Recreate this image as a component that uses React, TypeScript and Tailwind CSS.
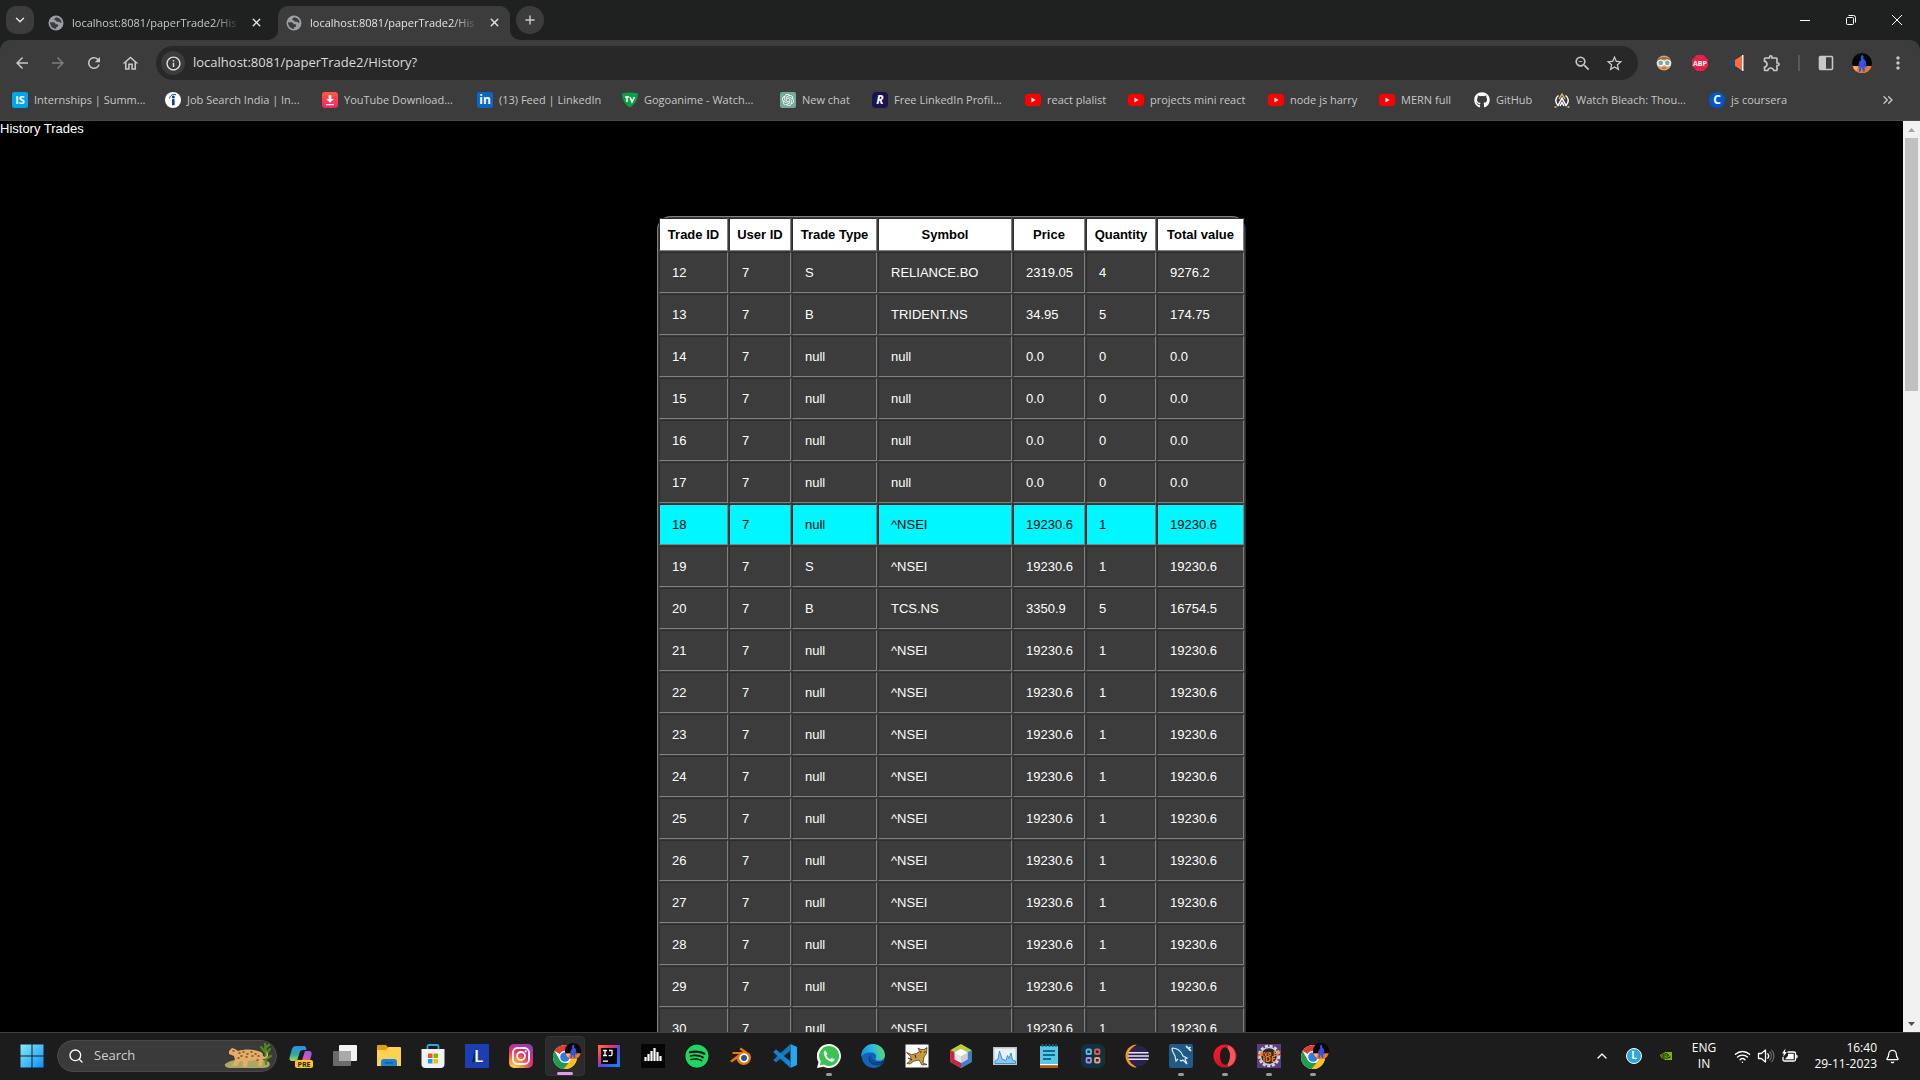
import type { ReactNode } from "react";
import { Bell, ChevronDown, ChevronUp, ChevronsRight, Plus, Search, Wifi, X } from "lucide-react";
import { FaGithub, FaSpotify } from "react-icons/fa";
import {
  MdArrowBack,
  MdArrowForward,
  MdInfoOutline,
  MdMoreVert,
  MdOutlineExtension,
  MdOutlineHome,
  MdRefresh,
  MdStarBorder,
  MdZoomOut,
} from "react-icons/md";
import { SiNvidia, SiOpenai } from "react-icons/si";

/* ---------- drawings ---------- */

function Globe() {
  return (
    <svg viewBox="0 0 16 16" className="size-4 shrink-0" aria-hidden="true">
      <circle cx="8" cy="8" r="7.500" fill="#9aa0a6" />
      <path d="M8.500 2.200c2.800.4 5 2.700 5.200 5.300-.9.8-2 .2-2.200-.8H9.300c-.9 0-1.300-.7-1.300-1.400H6.200c0-1.600 1-2.700 2.300-3.100z" fill="#3c3c3c" />
      <path d="M2 7.200h3.200c1.500 0 2.300.9 2.300 2h1.700c.6 0 1 .6 1 1.300 0 1.200-.9 1.600-2 1.800v1.500C4.700 13.600 2 11 2 7.200z" fill="#3c3c3c" />
    </svg>
  );
}

function YouTube() {
  return (
    <svg viewBox="0 0 16 16" className="size-4 shrink-0" aria-hidden="true">
      <rect x="0" y="2" width="16" height="12" rx="3" fill="#f00" />
      <path d="M6.500 5.600v4.900l4-2.450z" fill="#fff" />
    </svg>
  );
}

function Figure() {
  return (
    <>
      <circle cx="12" cy="12" r="12" fill="#050508" />
      <path d="M0.400 15.500h23.200A12 12 0 0 1 0.400 15.500z" fill="#f4762a" />
      <path d="M1 16l7 0-3 5.500A12 12 0 0 1 1 16z" fill="#fdb35c" />
      <path d="M12 2l2 2-.5 2.500 3 3 1 8-1.500.5-1-5 .5 9-2.500.5-1-6-2 6H8l1.500-9-1.500 4-1-.5 2-7 2-1.500-.7-3z" fill="#2458e8" />
      <path d="M11.500 8l2 2-1 5-2 2z" fill="#7a3bd0" />
    </>
  );
}

function ChromeLogo() {
  return (
    <svg viewBox="0 0 30 26" className="ml-1 h-[26px] w-[30px] shrink-0" aria-hidden="true">
      <circle cx="13" cy="14" r="12" fill="#fff" />
      <path d="M2.600 8A12 12 0 0 1 23.400 8H13a6 6 0 0 0-5.200 3z" fill="#e33b2e" />
      <path d="M2.600 8l5.200 9a6 6 0 0 0 5.200 3l-2.600 5.700A12 12 0 0 1 2.600 8z" fill="#1e9e4a" />
      <path d="M13 8h10.400a12 12 0 0 1-11.800 17.900L18.200 17A6 6 0 0 0 13 8z" fill="#fbc116" />
      <path d="M7.800 17l5.200 3h3.600l-5 5.900A12 12 0 0 1 5 22z" fill="#1e9e4a" />
      <circle cx="13" cy="14" r="6" fill="#fff" />
      <circle cx="13" cy="14" r="4.800" fill="#2f7be8" />
      <svg x="13" y="0" width="16" height="16" viewBox="0 0 24 24">
        <Figure />
      </svg>
    </svg>
  );
}

function Leopard() {
  return (
    <svg viewBox="0 0 48 28" className="h-7 w-12 shrink-0" aria-hidden="true">
      <path d="M1 22c6-6 34-8 44-2 3 5-3 6-8 6H8c-4 0-8-1-7-4z" fill="#a9a963" />
      <path d="M42 22c-1-7 1-12-1-20M42 12l4-5M41 10l-4-5M42 17l5-3M41 6l4-3" stroke="#4f8a1c" strokeWidth="2.200" fill="none" strokeLinecap="round" />
      <path d="M5 9l3-3 3 1 3 2c6-2 14-2 20 0 4 1 5 2 5 5l2 1c2-1 2-3 1-5l2 1c1 4-2 6-5 6l-1 7h-4l1-4-3-2-8 1-1 6h-4l0-5-3-1-3 5H8l3-6-1-4-5-2z" fill="#e2ae6a" />
      <path d="M15 11h1M19 10h1M23 12h1M27 10h1M31 12h1M17 14h1M22 15h1M28 14h1M34 14h1M33 18h1M14 16h1M9 9h1" stroke="#7c4a1c" strokeWidth="1.500" strokeLinecap="round" />
    </svg>
  );
}

function Art({ children }: { children: ReactNode }) {
  return (
    <svg viewBox="0 0 24 24" className="size-6 shrink-0" aria-hidden="true">
      {children}
    </svg>
  );
}

function WindowsLogo() {
  return (
    <Art>
      <defs>
        <linearGradient id="win" x1="0" y1="0" x2="1" y2="1">
          <stop offset="0" stopColor="#86eaff" />
          <stop offset="1" stopColor="#0a91f5" />
        </linearGradient>
      </defs>
      <path d="M.5.500h11v11H.5zM12.500.500h11v11h-11zM.5 12.500h11v11H.5zM12.500 12.500h11v11h-11z" fill="url(#win)" />
    </Art>
  );
}

function Speaker() {
  return (
    <svg viewBox="0 0 18 16" className="h-4 w-[18px]" fill="none" strokeWidth="1.300" strokeLinejoin="round" strokeLinecap="round" aria-hidden="true">
      <path d="M1.500 5.500h2.800L8.500 2v12l-4.200-3.500H1.500z" stroke="#fff" />
      <path d="M10.800 5.800a3.500 3.500 0 0 1 0 4.400" stroke="#fff" />
      <path d="M12.800 4a6 6 0 0 1 0 8M14.800 2.300a8.800 8.800 0 0 1 0 11.400" stroke="#666" />
    </svg>
  );
}

function Battery() {
  return (
    <svg viewBox="0 0 18 16" className="h-4 w-[18px]" aria-hidden="true">
      <path d="M6.500 4H13q1.500 0 1.500 1.500v6q0 1.500-1.500 1.500H3.500Q2 13 2 11.500V9" fill="none" stroke="#fff" strokeWidth="1.300" />
      <path d="M7 5.800h5.700v5.400H4l3-3.500z" fill="#fff" />
      <path d="M15.200 6.500q1.500.2 1.500 2t-1.500 2z" fill="#fff" />
      <path d="M4.500.5L1 5.500h2L2 9l4-5H4z" fill="#fff" />
    </svg>
  );
}

/* ---------- browser chrome ---------- */

function Tab({ active }: { active?: boolean }) {
  return (
    <div
      className={
        active
          ? "relative flex h-[34px] w-[232px] items-center rounded-t-[10px] bg-[#3c3c3c] pr-2 pl-2 text-[#e3e3e3]"
          : "flex h-[34px] w-[238px] items-center pr-3 pl-2 text-[#c7c7c7]"
      }
    >
      {active && (
        <>
          <svg viewBox="0 0 10 10" className="absolute bottom-0 -left-2.5 size-2.5" aria-hidden="true">
            <path d="M10 0v10H0A10 10 0 0 0 10 0z" fill="#3c3c3c" />
          </svg>
          <svg viewBox="0 0 10 10" className="absolute -right-2.5 bottom-0 size-2.5" aria-hidden="true">
            <path d="M0 0v10h10A10 10 0 0 1 0 0z" fill="#3c3c3c" />
          </svg>
        </>
      )}
      <Globe />
      <span className="ml-2 w-[168px] mask-r-from-85% text-[11px] whitespace-nowrap">localhost:8081/paperTrade2/His</span>
      <button type="button" aria-label="Close tab" className="ml-2 flex size-4 items-center justify-center pb-0.5 text-[#e3e3e3]">
        <X size={13} strokeWidth={2.5} />
      </button>
    </div>
  );
}

type Bookmark = { label: string; width: string; icon: ReactNode };

const box = "flex size-4 shrink-0 items-center justify-center font-bold text-white";

const bookmarks: Bookmark[] = [
  { label: "Internships | Summ...", width: "w-[153px]", icon: <span className={`${box} rounded-xs bg-[#00a5ec] text-[11px]`}>IS</span> },
  {
    label: "Job Search India | In...",
    width: "w-[157px]",
    icon: (
      <svg viewBox="0 0 16 16" className="size-4 shrink-0" aria-hidden="true">
        <circle cx="8" cy="8" r="8" fill="#fff" />
        <circle cx="8.300" cy="5" r="1.500" fill="#0b3c9c" />
        <path d="M7 7.200h2.600v6H7z" fill="#0b3c9c" />
        <path d="M4.500 6.500C5 3.500 8 1.500 11 2.800" stroke="#0b3c9c" fill="none" />
      </svg>
    ),
  },
  {
    label: "YouTube Download...",
    width: "w-[155px]",
    icon: (
      <svg viewBox="0 0 16 16" className="size-4 shrink-0" aria-hidden="true">
        <defs>
          <linearGradient id="ytd" x1="0" y1="0" x2="0" y2="1">
            <stop offset="0" stopColor="#ff5a3c" />
            <stop offset="1" stopColor="#f5216a" />
          </linearGradient>
        </defs>
        <rect width="16" height="16" rx="3" fill="url(#ytd)" />
        <path d="M6.700 3h2.600v4h2.500L8 10.800 4.200 7h2.500zM4 12h8v1.300H4z" fill="#fff" />
      </svg>
    ),
  },
  { label: "(13) Feed | LinkedIn", width: "w-[145px]", icon: <span className={`${box} rounded-xs bg-[#0a66c2] text-xs`}>in</span> },
  {
    label: "Gogoanime - Watch...",
    width: "w-[158px]",
    icon: (
      <svg viewBox="0 0 16 16" className="size-4 shrink-0" aria-hidden="true">
        <path d="M0 1.500q8-2 16 0c0 7-4 11-8 14C3 12.500 0 8 0 1.500z" fill="#0aa04a" />
        <path d="M3 5h4M5 5v5M8 5l2 5 2.500-5" stroke="#fff" strokeWidth="1.500" fill="none" />
      </svg>
    ),
  },
  {
    label: "New chat",
    width: "w-[92px]",
    icon: (
      <span className={`${box} rounded-xs bg-[#74aa9c]`}>
        <SiOpenai size={12} />
      </span>
    ),
  },
  { label: "Free LinkedIn Profil...", width: "w-[153px]", icon: <span className={`${box} rounded-sm bg-[#1c1250] text-xs italic`}>R</span> },
  { label: "react plalist", width: "w-[103px]", icon: <YouTube /> },
  { label: "projects mini react", width: "w-[140px]", icon: <YouTube /> },
  { label: "node js harry", width: "w-[111px]", icon: <YouTube /> },
  { label: "MERN full", width: "w-[95px]", icon: <YouTube /> },
  { label: "GitHub", width: "w-[80px]", icon: <FaGithub size={16} className="shrink-0 text-white" /> },
  {
    label: "Watch Bleach: Thou...",
    width: "w-[155px]",
    icon: (
      <svg viewBox="0 0 16 16" className="size-4 shrink-0" fill="none" aria-hidden="true">
        <path d="M4.500 3.500C1 6 .8 10 4 13.500L8 6l4 7.500C15.200 10 15 6 11.500 3.500M6 14l2-3.500 2 3.500" stroke="#fff" strokeWidth="1.500" />
        <path d="M5 7l3-5 3 5M.5 15h2M13.500 15h2" stroke="#e6b96a" strokeWidth="1.400" />
      </svg>
    ),
  },
  { label: "js coursera", width: "w-[100px]", icon: <span className={`${box} rounded-full bg-[#0056d2] text-xs`}>C</span> },
];

function TabStrip() {
  return (
    <header className="flex h-10 items-end bg-[#1f2121] pl-1.5">
      <button type="button" aria-label="Search tabs" className="mb-1.5 flex size-7 items-center justify-center rounded-[10px] bg-[#3c3c3c] text-[#e3e3e3]">
        <ChevronDown size={14} strokeWidth={2.5} />
      </button>
      <div className="ml-1.5 flex">
        <Tab />
        <Tab active />
      </div>
      <button type="button" aria-label="New tab" className="mb-1.5 ml-1.5 flex size-7 items-center justify-center rounded-full bg-[#3c3c3c] text-[#c7c7c7]">
        <Plus size={14} strokeWidth={2.5} />
      </button>
      <div className="ml-auto flex h-full items-center text-white">
        <button type="button" aria-label="Minimize" className="flex h-full w-[46px] items-center justify-center">
          <span className="h-px w-2.5 bg-white" />
        </button>
        <button type="button" aria-label="Restore" className="flex h-full w-[46px] items-center justify-center">
          <svg viewBox="0 0 10 10" className="size-2.5 overflow-visible" fill="none" stroke="#fff" aria-hidden="true">
            <rect x="0.500" y="2.500" width="7" height="7" rx="1" />
            <path d="M2.500.500h5a2 2 0 0 1 2 2v5" />
          </svg>
        </button>
        <button type="button" aria-label="Close" className="flex h-full w-[46px] items-center justify-center">
          <svg viewBox="0 0 10 10" className="size-2.5" stroke="#fff" aria-hidden="true">
            <path d="M0 0l10 10M10 0L0 10" />
          </svg>
        </button>
      </div>
    </header>
  );
}

const tool = "flex h-9 w-9 shrink-0 items-center justify-center";

function Toolbar() {
  return (
    <div className="bg-[#1f2121]">
      <div className="flex h-[46px] items-center rounded-t-[10px] bg-[#3c3c3c] pl-1 text-[#c7c7c7]">
        <button type="button" aria-label="Back" className={tool}>
          <MdArrowBack size={18} />
        </button>
        <button type="button" aria-label="Forward" className={`${tool} text-[#7d7d7d]`}>
          <MdArrowForward size={18} />
        </button>
        <button type="button" aria-label="Reload" className={tool}>
          <MdRefresh size={18} />
        </button>
        <button type="button" aria-label="Home" className={tool}>
          <MdOutlineHome size={19} />
        </button>
        <div className="ml-2 flex h-[34px] flex-1 items-center rounded-full bg-[#282828] pr-2 pl-[5px]">
          <span className="flex size-6 items-center justify-center rounded-full bg-[#3c3c3c] text-[#e3e3e3]">
            <MdInfoOutline size={17} />
          </span>
          <input
            aria-label="Address"
            defaultValue="localhost:8081/paperTrade2/History?"
            className="ml-2 min-w-0 flex-1 bg-transparent text-[13px] text-[#dcdcdc] outline-none"
          />
          <button type="button" aria-label="Zoom" className="flex size-8 items-center justify-center">
            <MdZoomOut size={19} />
          </button>
          <button type="button" aria-label="Bookmark this page" className="flex size-8 items-center justify-center">
            <MdStarBorder size={19} />
          </button>
        </div>
        <div className="ml-2 flex items-center pr-1">
          <button type="button" aria-label="Reader extension" className={tool}>
            <svg viewBox="0 0 16 16" className="size-4" aria-hidden="true">
              <circle cx="8" cy="8" r="7.500" fill="#d9a06c" />
              <path d="M1 6C2 1 14 1 15 6L11 4.500H5z" fill="#8a6a45" />
              <circle cx="4.700" cy="8" r="3" fill="#7fa9a8" stroke="#fff" strokeWidth="1.200" />
              <circle cx="11.300" cy="8" r="3" fill="#7fa9a8" stroke="#fff" strokeWidth="1.200" />
              <path d="M6 13h4" stroke="#b2563a" />
            </svg>
          </button>
          <button type="button" aria-label="Adblock Plus" className={tool}>
            <svg viewBox="0 0 16 16" className="size-4" aria-hidden="true">
              <path d="M4.700 0h6.600L16 4.700v6.600L11.300 16H4.700L0 11.300V4.700z" fill="#ed1e45" />
              <text x="8" y="10.500" textAnchor="middle" fontSize="7" fontWeight="700" fill="#fff">ABP</text>
            </svg>
          </button>
          <button type="button" aria-label="Announcements" className={tool}>
            <svg viewBox="0 0 16 16" className="size-4" aria-hidden="true">
              <path d="M1.500 5H7v6H5.500l.5 4H4l-1-4H1.500Q0 10 0 8t1.500-3z" fill="#2c4363" />
              <path d="M7 5l7-4.500v15L7 11z" fill="#ff6b3d" />
              <path d="M14 0h1.500v16H14z" fill="#f4f4f4" />
            </svg>
          </button>
          <button type="button" aria-label="Extensions" className={tool}>
            <MdOutlineExtension size={20} />
          </button>
          <span className="mx-2 h-4 w-0.5 bg-[#5a5a5a]" />
          <button type="button" aria-label="Side panel" className={tool}>
            <svg viewBox="0 0 16 16" className="size-4" aria-hidden="true">
              <rect x="1.500" y="1.500" width="13" height="13" rx="1" fill="none" stroke="#c7c7c7" strokeWidth="1.600" />
              <path d="M1.500 1.500H8v13H1.500z" fill="#c7c7c7" />
            </svg>
          </button>
          <button type="button" aria-label="Profile" className={tool}>
            <svg viewBox="0 0 24 24" className="size-5" aria-hidden="true">
              <Figure />
            </svg>
          </button>
          <button type="button" aria-label="Menu" className={tool}>
            <MdMoreVert size={20} />
          </button>
        </div>
      </div>
    </div>
  );
}

function BookmarksBar() {
  return (
    <nav aria-label="Bookmarks" className="flex h-[35px] items-center border-b border-[#4a4a4a] bg-[#3c3c3c] pb-1.5 pl-3 text-[11px] text-[#c7c7c7]">
      {bookmarks.map((b) => (
        <a key={b.label} href="#" className={`flex shrink-0 items-center gap-1.5 whitespace-nowrap ${b.width}`}>
          {b.icon}
          <span>{b.label}</span>
        </a>
      ))}
      <button type="button" aria-label="More bookmarks" className="mr-6 ml-auto">
        <ChevronsRight size={16} />
      </button>
    </nav>
  );
}

/* ---------- page ---------- */

type Trade = [number, string, string, string, number, string];

const trades: Trade[] = [
  [12, "S", "RELIANCE.BO", "2319.05", 4, "9276.2"],
  [13, "B", "TRIDENT.NS", "34.95", 5, "174.75"],
  [14, "null", "null", "0.0", 0, "0.0"],
  [15, "null", "null", "0.0", 0, "0.0"],
  [16, "null", "null", "0.0", 0, "0.0"],
  [17, "null", "null", "0.0", 0, "0.0"],
  [18, "null", "^NSEI", "19230.6", 1, "19230.6"],
  [19, "S", "^NSEI", "19230.6", 1, "19230.6"],
  [20, "B", "TCS.NS", "3350.9", 5, "16754.5"],
  ...Array.from({ length: 10 }, (_, i): Trade => [21 + i, "null", "^NSEI", "19230.6", 1, "19230.6"]),
];

const columns = [
  { title: "Trade ID", width: "w-[69px]" },
  { title: "User ID", width: "w-[62px]" },
  { title: "Trade Type", width: "w-[85px]" },
  { title: "Symbol", width: "w-[134px]" },
  { title: "Price", width: "w-[72px]" },
  { title: "Quantity", width: "w-[70px]" },
  { title: "Total value", width: "w-[87px]" },
];

const cellBorder = "border border-t-[#2c2c2c] border-r-[#808080] border-b-[#808080] border-l-[#2c2c2c]";

function HistoryPage() {
  return (
    <div className="flex min-h-0 flex-1 bg-black">
      <main className="min-w-0 flex-1 overflow-hidden font-['Liberation_Sans',sans-serif] text-[13px] text-white">
        <h1 className="h-[95px] leading-4">History Trades</h1>
        <table className="mx-auto table-fixed border-separate border-spacing-px rounded-[14px] border border-t-[#808080] border-r-[#2c2c2c] border-b-[#2c2c2c] border-l-[#808080] bg-[#3c3c3c]">
          <thead>
            <tr className="h-[33px] bg-white text-black">
              {columns.map((c) => (
                <th key={c.title} scope="col" className={`p-0 whitespace-nowrap ${cellBorder} ${c.width}`}>
                  {c.title}
                </th>
              ))}
            </tr>
          </thead>
          <tbody>
            {trades.map(([id, type, symbol, price, quantity, total]) => (
              <tr key={id} className={id === 18 ? "h-[41px] bg-[#00f7ff] text-black" : "h-[41px]"}>
                {[id, 7, type, symbol, price, quantity, total].map((value, i) => (
                  <td key={columns[i].title} className={`py-0 pr-0 pl-3 ${cellBorder}`}>
                    {value}
                  </td>
                ))}
              </tr>
            ))}
          </tbody>
        </table>
      </main>
      <div className="flex w-[17px] shrink-0 flex-col items-center bg-[#f1f1f1]">
        <span className="flex h-[17px] items-center">
          <svg viewBox="0 0 7 4" className="h-1 w-[7px]" aria-hidden="true">
            <path d="M0 4l3.500-4L7 4z" fill="#a3a3a3" />
          </svg>
        </span>
        <span className="h-[253px] w-[13px] bg-[#c1c1c1]" />
        <span className="mt-auto flex h-[17px] items-center">
          <svg viewBox="0 0 7 4" className="h-1 w-[7px]" aria-hidden="true">
            <path d="M0 0l3.500 4L7 0z" fill="#505050" />
          </svg>
        </span>
      </div>
    </div>
  );
}

/* ---------- taskbar ---------- */

type TaskbarApp = { name: string; art: ReactNode; state?: "active" | "running" };

const apps: TaskbarApp[] = [
  {
    name: "Copilot",
    art: (
      <Art>
        <defs>
          <linearGradient id="cop1" x1="0" y1="0" x2="0" y2="1">
            <stop offset="0" stopColor="#2f8be8" />
            <stop offset="0.600" stopColor="#2fae9b" />
            <stop offset="1" stopColor="#b6d34a" />
          </linearGradient>
          <linearGradient id="cop2" x1="1" y1="0" x2="0" y2="1">
            <stop offset="0" stopColor="#8a5cf0" />
            <stop offset="0.500" stopColor="#d957b8" />
            <stop offset="1" stopColor="#f58a5a" />
          </linearGradient>
        </defs>
        <path d="M7 2h8c2 0 2 2 2.500 4H14c-2 0-3 1-3.500 3L9 14c-.5 2-1.500 3-3.500 3H3c-2.500 0-3-2-2.300-4L3 5c.6-2 2-3 4-3z" fill="url(#cop1)" />
        <path d="M16 7h4c2.500 0 3 2 2.500 4l-2 7c-.6 2-2 3-4 3H9c2 0 3-1 3.500-3z" fill="url(#cop2)" />
        <rect x="6" y="16" width="18" height="8" rx="2" fill="#fdc61a" />
        <text x="15" y="22.500" textAnchor="middle" fontSize="7" fontWeight="700" fill="#222">PRE</text>
      </Art>
    ),
  },
  {
    name: "Task view",
    art: (
      <Art>
        <rect x="6" y="1" width="18" height="16" rx="1" fill="#f4f4f4" />
        <rect x="0" y="7" width="18" height="15" rx="1" fill="#6b6b6b" />
        <path d="M6 7h12v10H6z" fill="#a9a9a9" />
      </Art>
    ),
  },
  {
    name: "File Explorer",
    art: (
      <Art>
        <path d="M0 2q0-1 1-1h8l2.500 3H24v18H0z" fill="#e3a008" />
        <path d="M0 6h9l2.500-3H23q1 0 1 1v18H0z" fill="#ffd152" />
        <path d="M4 22v-4q0-3 3-3h10q3 0 3 3v4z" fill="#1c82d4" />
        <path d="M8 18h8v1.500H8z" fill="#0d5ea6" />
      </Art>
    ),
  },
  {
    name: "Microsoft Store",
    art: (
      <Art>
        <path d="M6.500 6V2.500q0-1.500 1.500-1.500h8q1.500 0 1.500 1.500V6" fill="none" stroke="#28a8ea" strokeWidth="1.800" />
        <path d="M.5 5h23v15q0 4-4 4h-15q-4 0-4-4z" fill="#f2f2f2" />
        <path d="M7 9.500h4.500V14H7z" fill="#f25022" />
        <path d="M12.500 9.500H17V14h-4.500z" fill="#7fba00" />
        <path d="M7 15h4.500v4.500H7z" fill="#00a4ef" />
        <path d="M12.500 15H17v4.500h-4.500z" fill="#ffb900" />
      </Art>
    ),
  },
  {
    name: "L app",
    art: (
      <Art>
        <rect width="24" height="24" fill="#1b3fb2" />
        <path d="M10 5v13H7z" fill="#0b1f63" />
        <text x="13.500" y="18" textAnchor="middle" fontSize="17" fontWeight="600" fill="#fff">L</text>
      </Art>
    ),
  },
  {
    name: "Instagram",
    art: (
      <Art>
        <defs>
          <radialGradient id="insta" cx="0.200" cy="1" r="1.200">
            <stop offset="0" stopColor="#ffd75e" />
            <stop offset="0.300" stopColor="#fb8b3c" />
            <stop offset="0.600" stopColor="#e1306c" />
            <stop offset="1" stopColor="#8a3ac8" />
          </radialGradient>
        </defs>
        <rect width="24" height="24" rx="5" fill="url(#insta)" />
        <rect x="4" y="4" width="16" height="16" rx="4.500" fill="none" stroke="#fff" strokeWidth="1.800" />
        <circle cx="12" cy="12" r="4" fill="none" stroke="#fff" strokeWidth="1.800" />
        <circle cx="16.700" cy="7.300" r="1.100" fill="#fff" />
      </Art>
    ),
  },
  { name: "Chrome", state: "active", art: <ChromeLogo /> },
  {
    name: "IntelliJ IDEA",
    art: (
      <Art>
        <defs>
          <linearGradient id="ij" x1="0" y1="0" x2="1" y2="1">
            <stop offset="0" stopColor="#ff7a2a" />
            <stop offset="0.350" stopColor="#e8307a" />
            <stop offset="0.550" stopColor="#4a4ee8" />
            <stop offset="1" stopColor="#0d8af5" />
          </linearGradient>
        </defs>
        <path d="M1 1h22v22H1z" fill="url(#ij)" />
        <path d="M4 4h16v16H4z" fill="#050208" />
        <path d="M6 6.500h4M8 6.500v5M6 11.500h4M12 6.500h3v4q0 1.200-1.500 1.200h-2" stroke="#fff" strokeWidth="1.300" fill="none" />
        <path d="M6 16.500h5v1.300H6z" fill="#fff" />
      </Art>
    ),
  },
  {
    name: "Deezer",
    art: (
      <Art>
        <rect width="24" height="24" fill="#050505" />
        <path d="M4.500 13v4M7.500 10v7M10.500 7v10M13.500 4v13M16.500 8v9M19.500 12v5" stroke="#fff" strokeWidth="2.200" />
      </Art>
    ),
  },
  { name: "Spotify", art: <FaSpotify size={24} className="rounded-full bg-[#111] text-[#1ed760]" /> },
  {
    name: "Blender",
    art: (
      <Art>
        <path d="M1 17l9-7H3.500V8H14l-3.500-2.800L12 3.500 21 10a7.300 7.300 0 1 1-13.500 5L3 18.500z" fill="#ea7600" />
        <circle cx="15" cy="14" r="4.700" fill="#fff" />
        <circle cx="15" cy="14" r="3" fill="#265787" />
      </Art>
    ),
  },
  {
    name: "Visual Studio Code",
    art: (
      <Art>
        <path d="M17.500 0L24 3v18l-6.500 3z" fill="#2aa4f0" />
        <path d="M17.500 0v6.500L3 18.500.200 16z" fill="#1379bd" />
        <path d="M17.500 24v-6.500L3 5.500.200 8z" fill="#0f86d3" />
      </Art>
    ),
  },
  {
    name: "WhatsApp",
    state: "running",
    art: (
      <Art>
        <path d="M12 0a12 12 0 1 1-5.500 22.700L0 24l1.500-6A12 12 0 0 1 12 0z" fill="#fff" />
        <path d="M12 2a10 10 0 1 1-5 18.600L2.800 21.500l1-4A10 10 0 0 1 12 2z" fill="#3ac351" />
        <path d="M8.500 6.500c-1.500.5-2 2-1.500 4 1 3.500 4 6.500 7 7.200 2 .3 3.500-.7 3.500-2.500l-2.800-1.500-1.300 1.500c-2-.8-3.200-2-4-4l1-1.300z" fill="#fff" />
      </Art>
    ),
  },
  {
    name: "Edge",
    art: (
      <Art>
        <defs>
          <linearGradient id="edge" x1="0" y1="0.500" x2="1" y2="0.300">
            <stop offset="0" stopColor="#1f8de0" />
            <stop offset="0.500" stopColor="#2cb8dc" />
            <stop offset="1" stopColor="#62e05a" />
          </linearGradient>
        </defs>
        <path d="M12 0a12 12 0 0 1 12 11l-1 7A12 12 0 1 1 12 0z" fill="#1264b8" />
        <path d="M.2 10A12 12 0 0 1 24 11c0 3.500-2.500 5.500-6 5.500-2.500 0-4-1-3.500-2 1.500-2 .5-5.500-3-6C7 8 2 9 .2 13z" fill="url(#edge)" />
        <path d="M9.500 10.500c-1.300 3 .2 7 4 8.300 3.500 1.200 6.500.5 9.300-1.300 0 0-.8 2-1.800 3-4 1.500-8.500 1.500-11.500-1.500-2.500-2.500-2.500-6 0-8.500z" fill="#0c3f86" />
        <path d="M11 10.500c-1.300 2.500-.5 5.300 2.500 7 3 1.500 6.500 1 9.700-1l.8 1.500-1.500 0c-4 1.700-8 1.200-10.500-1-2-2-2.300-4.500-1-6.500z" fill="#1c1c1c" />
      </Art>
    ),
  },
  {
    name: "Tomcat",
    art: (
      <Art>
        <path d="M.5.500h23v23H.5z" fill="#fff" />
        <path d="M13 4l3 1.500h3L22 3.500l-.5 6-2.500 3.500-1 6 4 1.500-5 .5-3-5-5 1-4 3-3-.5 4-4-.5-3-4-4 5 2 5-1 3-2z" fill="#c99a42" stroke="#3a2b12" strokeWidth="0.700" />
        <path d="M15 8h1.500M19 8h1.500M3 14l4 2M10 11l1 3" stroke="#222" />
      </Art>
    ),
  },
  {
    name: "NetBeans",
    art: (
      <Art>
        <path d="M12 0l10.500 6v12L12 24 1.500 18V6z" fill="#b8cf3d" />
        <path d="M1.500 6L12 12v12L1.500 18z" fill="#c8234b" />
        <path d="M22.500 6L12 12v12l10.500-6z" fill="#3a7fd0" />
        <path d="M12 5l6.500 3.500v7L12 19l-6.500-3.500v-7z" fill="#e6e6e0" />
        <path d="M12 12v7l6.500-3.500v-7z" fill="#c8d0d6" />
        <path d="M12 5l6.500 3.500L12 12 5.500 8.500z" fill="#fff" />
      </Art>
    ),
  },
  {
    name: "Performance Monitor",
    art: (
      <Art>
        <path d="M0 3h24v18H0z" fill="#b9c3cc" />
        <path d="M1.500 4.500h21v15h-21z" fill="#eaf2f8" />
        <path d="M2 17l3-2 1.500-8L9 15l4 1.500 1.500-5 1.500 3L18 9l1.500 7 3 1v2.500H2z" fill="#8cc8ee" stroke="#2f8fd0" strokeWidth="0.900" />
      </Art>
    ),
  },
  {
    name: "Notepad",
    art: (
      <Art>
        <path d="M3 20h18v4H3z" fill="#a85a12" />
        <path d="M3 2h18v19H3z" fill="#56c8e8" />
        <path d="M5.500 0v3M9 0v3M12.500 0v3M16 0v3M19 0v3" stroke="#126c8c" strokeWidth="1.500" />
        <path d="M6 7h12M6 11h12M6 15h8" stroke="#126c8c" strokeWidth="1.800" />
        <path d="M3 20h18v1.200H3z" fill="#fff" />
      </Art>
    ),
  },
  {
    name: "Widgets",
    art: (
      <Art>
        <rect width="24" height="24" rx="6" fill="#12303f" />
        <g fill="none" strokeWidth="1.800">
          <rect x="5.500" y="5.500" width="4.500" height="4.500" rx="1" stroke="#5bb8e8" />
          <rect x="14" y="5.500" width="4.500" height="4.500" rx="1" stroke="#e8584a" />
          <rect x="5.500" y="14" width="4.500" height="4.500" rx="1" stroke="#a98be8" />
          <rect x="14" y="14" width="4.500" height="4.500" rx="1" stroke="#e8a07a" />
        </g>
      </Art>
    ),
  },
  {
    name: "Eclipse",
    art: (
      <Art>
        <path d="M12 .5A11.500 11.500 0 0 0 12 23.500 13 13 0 0 1 12 .5z" fill="#f7941e" />
        <circle cx="13.500" cy="12" r="10.300" fill="#2c2255" />
        <path d="M3.500 8.700h20M3 12h21M3.500 15.300h20" stroke="#e8e4f4" strokeWidth="1.500" />
      </Art>
    ),
  },
  {
    name: "MySQL Workbench",
    state: "running",
    art: (
      <Art>
        <rect width="24" height="24" rx="2" fill="#1f5b86" />
        <path d="M3 4c5 0 9 3 11 8l4 2-2 1 2 5-4-4c-1 1-2 1-3 0M3 4c0 4 2 6 3 8l1 5 2-2" fill="none" stroke="#dfeef8" strokeWidth="1.200" />
        <path d="M17 2l5 5M21.500 3l-2 2" stroke="#e8f2fa" strokeWidth="1.700" />
      </Art>
    ),
  },
  {
    name: "Opera",
    state: "running",
    art: (
      <Art>
        <defs>
          <linearGradient id="opera" x1="0" y1="0" x2="1" y2="1">
            <stop offset="0" stopColor="#ff1b2d" />
            <stop offset="1" stopColor="#b8101f" />
          </linearGradient>
        </defs>
        <circle cx="12" cy="12" r="11.500" fill="url(#opera)" />
        <path d="M15 1.200A11.500 11.500 0 0 1 15 22.800z" fill="#f25a5a" />
        <ellipse cx="12" cy="12" rx="5" ry="8.700" fill="#1c1c1c" />
      </Art>
    ),
  },
  {
    name: "Java EE IDE",
    state: "running",
    art: (
      <Art>
        <rect width="24" height="24" fill="#5b3c86" />
        <circle cx="12" cy="12" r="9.700" fill="none" stroke="#d8d8d8" strokeWidth="3" strokeDasharray="3 1.600" />
        <circle cx="12" cy="12" r="8.500" fill="#2a2330" stroke="#ccc" strokeWidth="1.500" />
        <text x="12" y="11.500" textAnchor="middle" fontSize="6.500" fontWeight="700" fill="#f58220">Java EE</text>
        <text x="12" y="18" textAnchor="middle" fontSize="8" fontWeight="700" fill="#f58220">IDE</text>
      </Art>
    ),
  },
  { name: "Chrome profile", state: "running", art: <ChromeLogo /> },
];

function Taskbar() {
  return (
    <footer className="flex h-12 shrink-0 items-center border-t border-[#3f3f3f] bg-[#1c1c1c] pb-px pl-2.5 text-white">
      <button type="button" aria-label="Start" className="flex h-10 w-11 items-center justify-center">
        <WindowsLogo />
      </button>
      <label className="ml-[3px] flex h-8 w-[220px] items-center rounded-full border border-[#4a4a4a] bg-[#3a3a3a] pr-1 pl-2.5">
        <Search size={16} className="shrink-0" />
        <input aria-label="Search" placeholder="Search" className="ml-2.5 min-w-0 flex-1 bg-transparent text-[13px] outline-none placeholder:text-[#cfcfcf]" />
        <Leopard />
      </label>
      <div className="ml-0.5 flex">
        {apps.map((app) => (
          <button
            key={app.name}
            type="button"
            aria-label={app.name}
            className={
              app.state === "active"
                ? "relative mx-0.5 flex size-10 items-center justify-center rounded-sm border border-[#333] bg-[#2b2b2b]"
                : "relative flex h-10 w-11 items-center justify-center"
            }
          >
            {app.art}
            {app.state === "active" && <span className="absolute bottom-0 h-[3px] w-4 rounded-full bg-[#d9a0e4]" />}
            {app.state === "running" && <span className="absolute bottom-0 h-[3px] w-1.5 rounded-full bg-[#9a9a9a]" />}
          </button>
        ))}
      </div>
      <div className="ml-auto flex items-center text-xs">
        <button type="button" aria-label="Hidden icons" className="flex w-8 justify-center">
          <ChevronUp size={16} />
        </button>
        <span className="flex w-8 justify-center">
          <span className="flex size-4 items-center justify-center rounded-full border border-white bg-[#2ea6d8] text-[10px] font-bold">L</span>
        </span>
        <span className="flex w-8 justify-center text-[#76b900]">
          <SiNvidia size={12} />
        </span>
        <span className="w-11 text-center leading-4">
          ENG
          <br />
          IN
        </span>
        <span className="ml-1 flex w-6 justify-center">
          <Wifi size={17} />
        </span>
        <span className="flex w-6 justify-center">
          <Speaker />
        </span>
        <span className="flex w-6 justify-center">
          <Battery />
        </span>
        <span className="w-[75px] text-right leading-4">
          16:40
          <br />
          29-11-2023
        </span>
        <button type="button" aria-label="Notifications" className="mr-5 ml-2 flex justify-center">
          <Bell size={15} />
        </button>
      </div>
    </footer>
  );
}

export default function App() {
  return (
    <div className="flex h-screen flex-col overflow-hidden bg-black font-['Open_Sans','Noto_Sans',sans-serif]">
      <TabStrip />
      <Toolbar />
      <BookmarksBar />
      <HistoryPage />
      <Taskbar />
    </div>
  );
}
